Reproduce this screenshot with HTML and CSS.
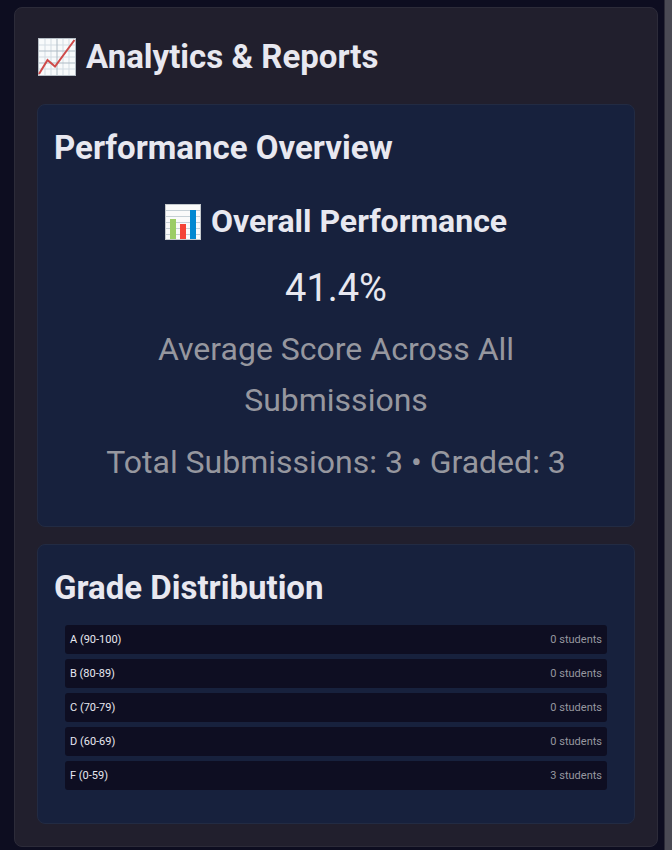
FILE: index.html
```html
<!DOCTYPE html>
<html lang="en">
<head>
<meta charset="utf-8">
<meta name="viewport" content="width=device-width, initial-scale=1">
<title>Analytics &amp; Reports</title>
<link rel="stylesheet" href="styles.css">
</head>
<body>
<main class="page">
  <section class="panel">
    <h1 class="title panel-title">
      <svg class="icon icon-large" viewBox="0 0 38 38" aria-hidden="true">
        <rect x="0.5" y="0.5" width="37" height="37" fill="#f8fafb" stroke="#b5bdc5"/>
        <path d="M7 1v36M13 1v36M25 1v36M31 1v36M1 7h36M1 19h36M1 31h36" fill="none" stroke="#d3dce3"/>
        <path d="M19 1v36M1 13h36M1 25h36" fill="none" stroke="#aebbc5"/>
        <path d="M1 36L9.500 22L17 28.500L36.500 2" fill="none" stroke="#cf4a49" stroke-width="2"/>
      </svg>
      <span>Analytics &amp; Reports</span>
    </h1>
    <section class="card">
      <h2 class="title">Performance Overview</h2>
      <div class="overview">
        <h3 class="overview-title">
          <svg class="icon" viewBox="0 0 36 36" aria-hidden="true">
            <rect x="0.5" y="0.5" width="35" height="35" fill="#fafafa" stroke="#c3c8cc"/>
            <path d="M1 6.500h34M1 12.500h34M1 18.500h34M1 24.500h34M1 30.500h34" fill="none" stroke="#c6d0d6"/>
            <rect x="5" y="15" width="6" height="20" fill="#9ccc65"/>
            <rect x="15" y="20" width="6" height="15" fill="#f44336"/>
            <rect x="25" y="6" width="6" height="29" fill="#0288d1"/>
          </svg>
          <span>Overall Performance</span>
        </h3>
        <p class="score">41.4%</p>
        <p class="note">Average Score Across All Submissions</p>
        <p class="note totals">Total Submissions: 3 • Graded: 3</p>
      </div>
    </section>
    <section class="card">
      <h2 class="title">Grade Distribution</h2>
      <ul class="grades">
        <li class="grade"><span>A (90-100)</span><span class="count">0 students</span></li>
        <li class="grade"><span>B (80-89)</span><span class="count">0 students</span></li>
        <li class="grade"><span>C (70-79)</span><span class="count">0 students</span></li>
        <li class="grade"><span>D (60-69)</span><span class="count">0 students</span></li>
        <li class="grade"><span>F (0-59)</span><span class="count">3 students</span></li>
      </ul>
    </section>
  </section>
</main>
<div class="scroll-track"></div>
</body>
</html>
```
FILE: styles.css
```css
* {
  box-sizing: border-box;
  margin: 0;
  padding: 0;
}

body {
  display: flex;
  min-height: 100vh;
  background: #0d0d20;
  color: #e8e8f0;
  font: 32px/51px Roboto, sans-serif;
}

.page {
  flex: 1;
  min-width: 0;
  padding: 7px 6px 3px 14px;
}

.scroll-track {
  width: 8px;
  background: #4a4a54;
  border-left: 1px solid #2c2b38;
}

.panel {
  display: flex;
  flex-direction: column;
  gap: 17px;
  padding: 22px;
  background: #211f2d;
  border: 1px solid #2c2b39;
  border-radius: 8px;
}

.title {
  font-size: 33px;
  font-weight: 700;
  line-height: 53px;
}

.panel-title {
  display: flex;
  align-items: center;
  gap: 10px;
  margin-bottom: 4px;
  padding-left: 1px;
}

.icon {
  flex: none;
  width: 36px;
  height: 36px;
}

.icon-large {
  width: 38px;
  height: 38px;
}

.card {
  padding: 16px;
  background: #17213d;
  border: 1px solid #222b43;
  border-radius: 8px;
}

.overview {
  padding: 22px;
  text-align: center;
}

.overview-title {
  display: flex;
  align-items: center;
  justify-content: center;
  gap: 10px;
  font-size: 32px;
}

.score {
  margin: 11px 0 5px;
  font-size: 38px;
  line-height: 61px;
}

.note {
  color: #96979f;
}

.totals {
  margin-top: 11px;
}

.grades {
  display: flex;
  flex-direction: column;
  gap: 5px;
  padding: 11px 11px 17px;
  list-style: none;
}

.grade {
  display: flex;
  justify-content: space-between;
  padding: 5px;
  background: #0e0e22;
  border-radius: 3px;
  font-size: 11px;
  line-height: 19px;
}

.count {
  color: #96979f;
}
```
